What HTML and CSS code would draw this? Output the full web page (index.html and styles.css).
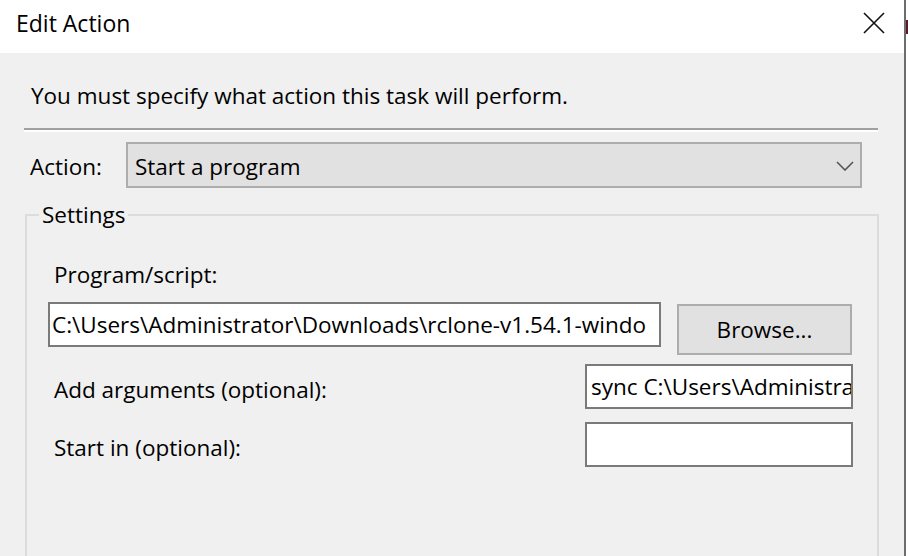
FILE: index.html
```html
<!DOCTYPE html>
<html>
<head>
<meta charset="utf-8">
<link rel="stylesheet" href="styles.css">
</head>
<body>
<div class="screen">
  <div class="window">
    <div class="titlebar">
      <span class="title">Edit Action</span>
      <svg class="close" width="22" height="22" viewBox="0 0 22 22"><path d="M1 1L21 21M21 1L1 21" stroke="#111" stroke-width="1.6" fill="none"/></svg>
    </div>
    <div class="content">
      <div class="intro">You must specify what action this task will perform.</div>
      <div class="separator"></div>
      <div class="action-row">
        <span class="label">Action:</span>
        <div class="combo">
          <span>Start a program</span>
          <svg class="chev" width="18" height="10" viewBox="0 0 18 10"><path d="M1 1L9 9L17 1" stroke="#555" stroke-width="1.6" fill="none"/></svg>
        </div>
      </div>
      <fieldset class="group">
        <legend>Settings</legend>
        <div class="field-label">Program/script:</div>
        <div class="prog-row">
          <div class="input wide"><span class="clip">C:\Users\Administrator\Downloads\rclone-v1.54.1-windo</span></div>
          <div class="button">Browse...</div>
        </div>
        <div class="arg-row first">
          <span class="label">Add arguments (optional):</span>
          <div class="input narrow"><span class="clip">sync C:\Users\Administra</span></div>
        </div>
        <div class="arg-row second">
          <span class="label">Start in (optional):</span>
          <div class="input narrow"></div>
        </div>
      </fieldset>
    </div>
  </div>
  <div class="behind">
    <div class="behind-mark"></div>
  </div>
</div>
</body>
</html>
```
FILE: styles.css
```css
html, body {
  margin: 0;
  padding: 0;
  background: #ffffff;
}
.screen {
  width: 908px;
  height: 556px;
  overflow: hidden;
  display: flex;
  font-family: "Open Sans", "Noto Sans", sans-serif;
  font-size: 22.5px;
  color: #000;
}
.window {
  width: 904px;
  flex: none;
  border-right: 2px solid #6d6d6d;
  display: flex;
  flex-direction: column;
  background: #f0f0f0;
}
.behind {
  flex: 1;
  background: #fff;
  padding-top: 20px;
}
.behind-mark {
  height: 14px;
  background: #5a1a2a;
}
.titlebar {
  height: 53px;
  flex: none;
  background: #fff;
  display: flex;
  align-items: center;
  justify-content: space-between;
  padding: 0 19px 8px 16px;
  box-sizing: border-box;
}
.title {
  font-size: 23px;
  line-height: 30px;
}
.close {
  display: block;
}
.content {
  flex: 1;
  padding: 28px 0 0 0;
  display: flex;
  flex-direction: column;
}
.intro {
  padding-left: 31px;
  line-height: 30px;
}
.separator {
  margin: 17px 0 0 24px;
  width: 854px;
  border-top: 2px solid #a0a0a0;
  border-bottom: 2px solid #ffffff;
}
.action-row {
  margin-top: 10px;
  display: flex;
  align-items: center;
  padding-left: 30px;
}
.action-row .label {
  width: 96px;
  line-height: 30px;
  padding-top: 3px;
}
.combo {
  width: 736px;
  height: 46px;
  box-sizing: border-box;
  border: 2px solid #adadad;
  background: #e1e1e1;
  display: flex;
  align-items: center;
  justify-content: space-between;
  padding: 2px 6px 0 7px;
}
.chev {
  display: block;
}
.group {
  margin: 12px 0 0 25px;
  width: 854px;
  box-sizing: border-box;
  padding: 0;
  border: 2px solid #dcdcdc;
  flex: 1;
  min-height: 400px;
}
.group legend {
  margin-left: 12px;
  padding: 0 3px;
  line-height: 30px;
}
.field-label {
  margin: 30px 0 0 27px;
  line-height: 30px;
}
.prog-row {
  margin: 12px 0 0 21px;
  display: flex;
  align-items: flex-start;
}
.input {
  box-sizing: border-box;
  height: 45px;
  border: 2px solid #7a7a7a;
  background: #fff;
  white-space: nowrap;
  overflow: hidden;
  line-height: 41px;
  padding-left: 2px;
}
.clip {
  display: block;
  overflow: hidden;
}
.input.wide {
  width: 613px;
}
.button {
  margin: 2px 0 0 16px;
  width: 175px;
  height: 51px;
  box-sizing: border-box;
  border: 2px solid #adadad;
  background: #e1e1e1;
  display: flex;
  align-items: center;
  justify-content: center;
}
.arg-row {
  display: flex;
  align-items: center;
  justify-content: space-between;
  padding: 0 24px 0 27px;
}
.arg-row.first {
  margin-top: 9px;
}
.arg-row.second {
  margin-top: 13px;
}
.arg-row .label {
  line-height: 30px;
  padding-top: 6px;
}
.input.narrow {
  width: 268px;
  padding-left: 4px;
}
```
